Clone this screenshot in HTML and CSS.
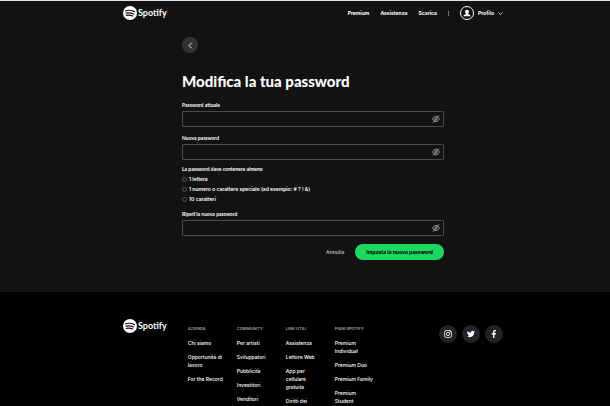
FILE: index.html
```
<!DOCTYPE html>
<html lang="it">
<head>
  <meta charset="UTF-8">
  <meta name="viewport" content="width=device-width, initial-scale=1">
  <title>Modifica la tua password - Spotify</title>
  <link rel="stylesheet" href="styles.css">
</head>
<body>

<!-- icone condivise -->
<svg class="sprite" aria-hidden="true">
  <symbol id="spotify" viewBox="0 0 24 24">
    <circle cx="12" cy="12" r="12" fill="#fff"/>
    <path d="M4.5 8.2c5-1.500 10.500-1 15 1.500M5.200 12.300c4.500-1.300 8.800-.8 12.800 1.500M5.900 16c3.800-1 7.300-.6 10.600 1.300" fill="none" stroke="#121212" stroke-width="2.100" stroke-linecap="round"/>
  </symbol>
  <symbol id="eye-off" viewBox="0 0 16 16">
    <path d="M1 8c3.500-7 10.500-7 14 0-3.500 7-10.500 7-14 0zM2 15.500 14 .5" fill="none" stroke="#b3b3b3" stroke-width="1.500"/>
    <circle cx="8" cy="8" r="2.500" fill="none" stroke="#b3b3b3" stroke-width="1.300"/>
  </symbol>
</svg>

<header class="header">
  <div class="wrap header-row">
    <a class="logo" href="#"><svg><use href="#spotify"/></svg>Spotify</a>
    <nav class="nav">
      <a href="#">Premium</a>
      <a href="#">Assistenza</a>
      <a href="#">Scarica</a>
      <span class="divider"></span>
      <button class="profile" type="button">
        <span class="avatar">
          <svg viewBox="0 0 16 16"><path d="M8 1.500c2.400 0 4 1.700 4 4 0 1.700-.8 3-1.900 3.900v.8l4.400 2V14.500H1.500v-2.300l4.400-2v-.8C4.800 8.500 4 7.200 4 5.500c0-2.300 1.600-4 4-4z" fill="#fff"/></svg>
        </span>
        Profilo
        <svg class="chevron" viewBox="0 0 10 6"><path d="M1 1l4 4 4-4" fill="none" stroke="#fff" stroke-width="1.500"/></svg>
      </button>
    </nav>
  </div>
</header>

<main class="main">
  <button class="back" type="button" aria-label="Indietro">
    <svg viewBox="0 0 16 16"><path d="M11 1.500 4.500 8l6.500 6.500" fill="none" stroke="#fff" stroke-width="2"/></svg>
  </button>
  <h1>Modifica la tua password</h1>

  <form>
    <label for="current">Password attuale</label>
    <div class="field">
      <input type="password" id="current">
      <button type="button" aria-label="Mostra password"><svg><use href="#eye-off"/></svg></button>
    </div>

    <label for="new">Nuova password</label>
    <div class="field">
      <input type="password" id="new">
      <button type="button" aria-label="Mostra password"><svg><use href="#eye-off"/></svg></button>
    </div>

    <fieldset class="rules">
      <legend>La password deve contenere almeno</legend>
      <label class="rule"><input type="radio" disabled>1 lettera</label>
      <label class="rule"><input type="radio" disabled>1 numero o carattere speciale (ad esempio: # ? ! &amp;)</label>
      <label class="rule"><input type="radio" disabled>10 caratteri</label>
    </fieldset>

    <label for="repeat">Ripeti la nuova password</label>
    <div class="field">
      <input type="password" id="repeat">
      <button type="button" aria-label="Mostra password"><svg><use href="#eye-off"/></svg></button>
    </div>

    <div class="actions">
      <button class="cancel" type="button">Annulla</button>
      <button class="submit" type="submit">Imposta la nuova password</button>
    </div>
  </form>
</main>

<footer class="footer">
  <div class="wrap footer-row">
    <a class="logo" href="#"><svg><use href="#spotify"/></svg>Spotify</a>
    <div class="links">
      <div class="col">
        <h2>AZIENDA</h2>
        <a href="#">Chi siamo</a>
        <a href="#">Opportunità di lavoro</a>
        <a href="#">For the Record</a>
      </div>
      <div class="col">
        <h2>COMMUNITY</h2>
        <a href="#">Per artisti</a>
        <a href="#">Sviluppatori</a>
        <a href="#">Pubblicità</a>
        <a href="#">Investitori</a>
        <a href="#">Venditori</a>
      </div>
      <div class="col">
        <h2>LINK UTILI</h2>
        <a href="#">Assistenza</a>
        <a href="#">Lettore Web</a>
        <a href="#">App per cellulare<br>gratuita</a>
        <a href="#">Diritti dei</a>
      </div>
      <div class="col">
        <h2>PIANI SPOTIFY</h2>
        <a href="#">Premium Individual</a>
        <a href="#">Premium Duo</a>
        <a href="#">Premium Family</a>
        <a href="#">Premium Student</a>
      </div>
    </div>
    <div class="social">
      <a href="#" aria-label="Instagram">
        <svg viewBox="0 0 16 16" fill="none" stroke="#fff" stroke-width="1.700"><rect x="1" y="1" width="14" height="14" rx="4"/><circle cx="8" cy="8" r="3.300"/><circle cx="12" cy="4" r=".5"/></svg>
      </a>
      <a href="#" aria-label="Twitter">
        <svg viewBox="0 0 24 24"><path fill="#fff" d="M23.950 4.570a10 10 0 0 1-2.820.770 4.960 4.960 0 0 0 2.160-2.720c-.950.550-2 .960-3.130 1.180a4.920 4.920 0 0 0-8.380 4.480C7.690 8.090 4.070 6.130 1.640 3.160a4.920 4.920 0 0 0 1.520 6.570 4.900 4.900 0 0 1-2.230-.610v.060c0 2.380 1.700 4.370 3.950 4.820a5 5 0 0 1-2.210.080 4.940 4.940 0 0 0 4.600 3.420A9.870 9.870 0 0 1 0 19.540a14 14 0 0 0 7.550 2.210c9.050 0 14-7.500 14-13.980v-.640a9.900 9.900 0 0 0 2.400-2.560z"/></svg>
      </a>
      <a href="#" aria-label="Facebook">
        <svg viewBox="0 0 16 16"><path d="M6 16V9H3.500V6H6V4c0-2.600 1.500-4 3.800-4l2.200.2v2.500h-1.300C9.400 2.700 9 3.400 9 4.200V6h3l-.5 3H9v7z" fill="#fff"/></svg>
      </a>
    </div>
  </div>
</footer>

</body>
</html>
```
FILE: styles.css
```
* {
  box-sizing: border-box;
}
body {
  margin: 0;
  min-height: 100vh;
  display: flex;
  flex-direction: column;
  background: #121212;
  border-top: 1px solid #dfe5e2;
  color: #fff;
  font-family: Inter, "Liberation Sans", sans-serif;
  font-size: 5px;
  font-weight: 600;
  line-height: 8px;
}
a {
  color: #fff;
  text-decoration: none;
}
button {
  padding: 0;
  border: none;
  background: none;
  color: inherit;
  font: inherit;
  cursor: pointer;
}
svg {
  display: block;
}
.sprite {
  position: absolute;
  width: 0;
  height: 0;
}
.wrap {
  width: 100%;
  max-width: 396px;
  margin: 0 auto;
  padding-left: 16px;
}
.header-row {
  display: flex;
  align-items: center;
  justify-content: space-between;
  height: 24px;
}
.logo {
  display: flex;
  align-items: center;
  gap: 1px;
  height: 14px;
  font-family: Lato, sans-serif;
  font-size: 9px;
  font-weight: bold;
}
.logo svg {
  width: 14px;
  height: 14px;
}
.nav {
  display: flex;
  align-items: center;
  gap: 11px;
  font-weight: bold;
}
.divider {
  width: 1px;
  height: 5px;
  background: #777;
}
.profile {
  display: flex;
  align-items: center;
  gap: 4px;
}
.avatar {
  display: flex;
  align-items: center;
  justify-content: center;
  width: 14px;
  height: 14px;
  border: 1px solid #fff;
  border-radius: 50%;
}
.avatar svg {
  width: 8px;
  height: 8px;
}
.chevron {
  width: 5px;
  height: 3px;
}

.main {
  width: 100%;
  max-width: 278px;
  margin: 0 auto;
  padding: 12px 0 32px 16px;
}
.back {
  display: flex;
  align-items: center;
  justify-content: center;
  width: 16px;
  height: 16px;
  border-radius: 50%;
  background: #333;
}
.back svg {
  width: 7px;
  height: 7px;
}
h1 {
  margin: 18px 0 10px;
  font-family: Lato, sans-serif;
  font-size: 15px;
  font-weight: 900;
  line-height: 20px;
}
label,
legend {
  display: block;
  padding: 0;
  font-family: Lato, sans-serif;
  font-weight: bold;
}
.field {
  display: flex;
  align-items: center;
  height: 16px;
  margin: 2px 0 7px;
  padding-right: 3px;
  border: 1px solid #4a4a4a;
  border-radius: 1px;
}
.field input {
  flex: 1;
  min-width: 0;
  height: 14px;
  padding: 0 4px;
  border: none;
  outline: none;
  background: none;
  color: #fff;
  font: inherit;
}
.field svg {
  width: 8px;
  height: 8px;
}
.rules {
  margin: -2px 0 6px;
  padding: 0;
  border: none;
}
.rules legend {
  margin-bottom: 1px;
}
.rule {
  display: flex;
  align-items: center;
  gap: 2px;
  height: 10px;
  font-family: inherit;
  font-weight: 600;
}
.rule input {
  appearance: none;
  width: 5px;
  height: 5px;
  margin: 0;
  border: 1px solid #555;
  border-radius: 50%;
}
.actions {
  display: flex;
  align-items: center;
  justify-content: flex-end;
  gap: 11px;
  margin-top: 8px;
}
.cancel {
  color: #b3b3b3;
}
.submit {
  height: 16px;
  padding: 0 11px;
  border-radius: 8px;
  background: #1ed760;
  color: #000;
  font-weight: bold;
}

.footer {
  flex: 1;
  padding-top: 27px;
  background: #000;
}
.footer-row {
  display: flex;
  align-items: flex-start;
}
.links {
  display: flex;
  gap: 9px;
  margin: 6px 0 0 21px;
}
.col {
  display: flex;
  flex-direction: column;
  gap: 6px;
  width: 40px;
  font-weight: 500;
}
.col h2 {
  margin: 0;
  color: #919496;
  font-size: 4px;
  font-weight: bold;
  white-space: nowrap;
}
.social {
  display: flex;
  gap: 5px;
  margin: 6px 0 0 auto;
}
.social a {
  display: flex;
  align-items: center;
  justify-content: center;
  width: 18px;
  height: 18px;
  border-radius: 50%;
  background: #222326;
}
.social svg {
  width: 8px;
  height: 8px;
}
```
